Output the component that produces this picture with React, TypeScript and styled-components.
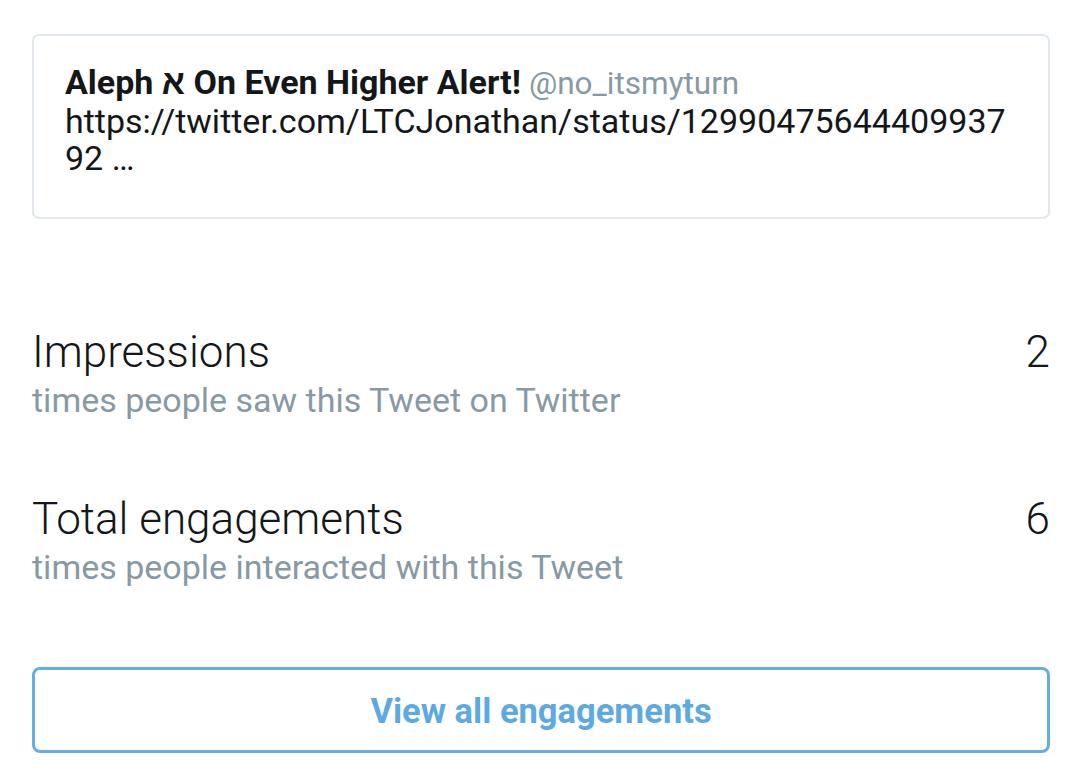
import styled, { createGlobalStyle } from "styled-components";

const GlobalStyle = createGlobalStyle`
  html, body {
    margin: 0;
    padding: 0;
    background: #ffffff;
  }
  body {
    font-family: Roboto, "Noto Sans", "Liberation Sans", sans-serif;
    color: #14171a;
  }
`;

const Page = styled.div`
  padding: 34px 30px 0 32px;
  display: flex;
  flex-direction: column;
`;

const TweetCard = styled.div`
  border: 2px solid #e1e8ed;
  border-radius: 7px;
  padding: 28px 30px 39px 31px;
  font-size: 34px;
  line-height: 37.5px;
`;

const Author = styled.div`
  white-space: nowrap;
`;

const Name = styled.span`
  font-weight: 700;
  color: #14171a;
`;

const Handle = styled.span`
  font-size: 31.5px;
  color: #8899a6;
  margin-left: 8px;
`;

const TweetText = styled.div`
  word-break: break-all;
  color: #14171a;
`;

const Stat = styled.div<{ first?: boolean }>`
  margin-top: ${(p) => (p.first ? "108px" : "74px")};
`;

const StatRow = styled.div`
  display: flex;
  justify-content: space-between;
  align-items: baseline;
  font-size: 44px;
  font-weight: 300;
  line-height: 51px;
  color: #14171a;
`;

const StatNote = styled.div`
  margin-top: 2px;
  font-size: 34px;
  line-height: 40px;
  color: #8899a6;
`;

const ViewButton = styled.button`
  margin-top: 80px;
  height: 86px;
  border: 3px solid #66ade0;
  border-radius: 8px;
  background: #ffffff;
  display: flex;
  align-items: center;
  justify-content: center;
  padding: 2px 0 0;
  font-family: Roboto, "Noto Sans", sans-serif;
`;

const ButtonLabel = styled.span`
  font-size: 34.5px;
  font-weight: 700;
  color: #5daae3;
`;

const stats = [
  { label: "Impressions", value: 2, note: "times people saw this Tweet on Twitter" },
  { label: "Total engagements", value: 6, note: "times people interacted with this Tweet" },
];

function App() {
  return (
    <>
      <GlobalStyle />
      <Page>
        <TweetCard>
          <Author>
            <Name>Aleph א On Even Higher Alert!</Name>
            <Handle>@no_itsmyturn</Handle>
          </Author>
          <TweetText>https://twitter.com/LTCJonathan/status/1299047564440993792 …</TweetText>
        </TweetCard>
        {stats.map((s, i) => (
          <Stat key={s.label} first={i === 0}>
            <StatRow>
              <span>{s.label}</span>
              <span>{s.value}</span>
            </StatRow>
            <StatNote>{s.note}</StatNote>
          </Stat>
        ))}
        <ViewButton>
          <ButtonLabel>View all engagements</ButtonLabel>
        </ViewButton>
      </Page>
    </>
  );
}

export default App;
